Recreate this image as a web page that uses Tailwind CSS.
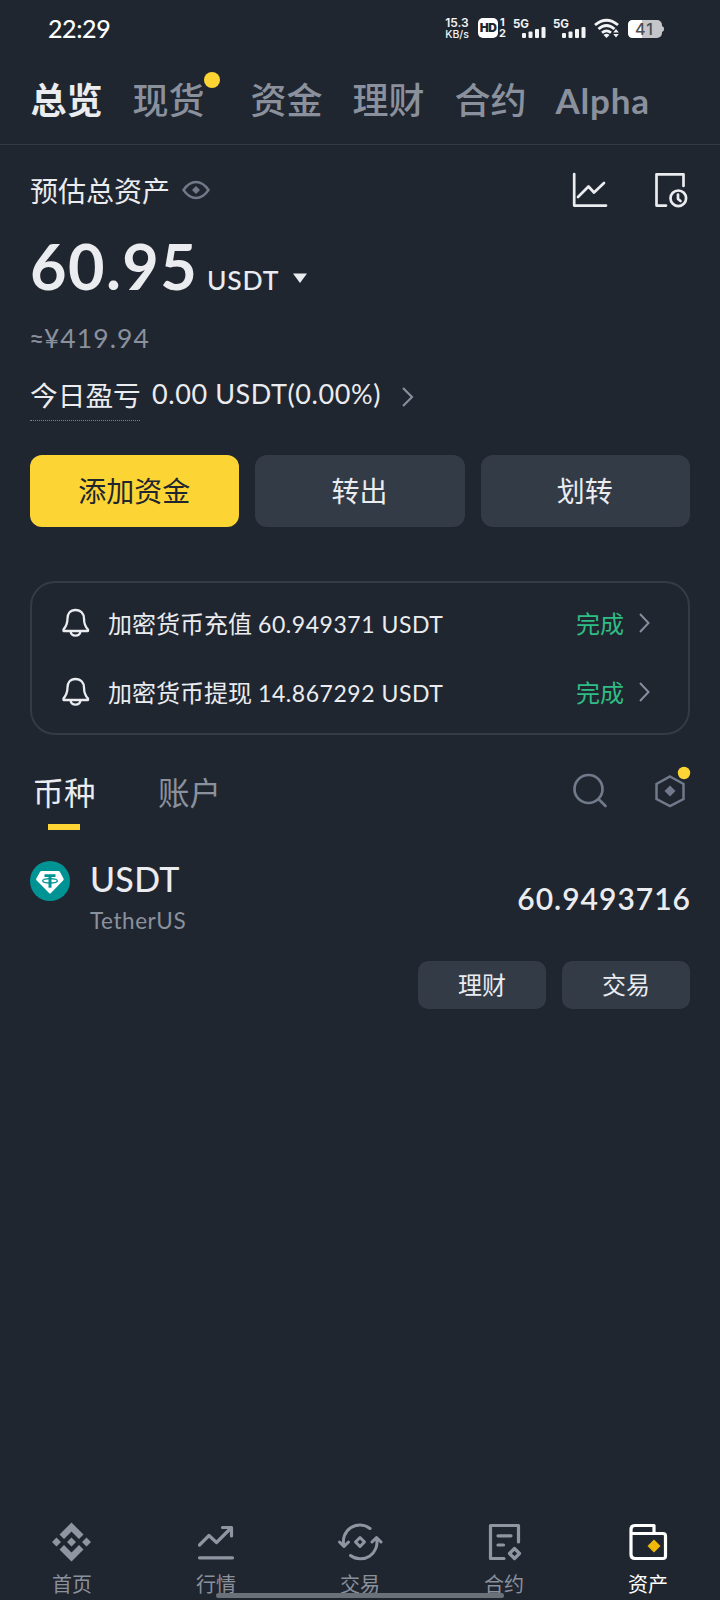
<!DOCTYPE html>
<html lang="zh-CN">
<head>
<meta charset="utf-8">
<title>资产总览</title>
<script src="https://cdn.jsdelivr.net/npm/@tailwindcss/browser@4"></script>
</head>
<body class="bg-[#202630]">
<div class="w-[720px] h-[1600px] flex flex-col relative overflow-hidden bg-[#202630] text-[#eaecef] font-['Lato','Noto_Sans_CJK_SC',sans-serif] whitespace-nowrap">

  <!-- status bar -->
  <div class="h-14 flex items-center justify-between pl-12 pr-[55px] text-white">
    <div class="text-[25px] leading-[56px] font-medium font-['Lato'] tracking-[-0.4px]">22:29</div>
    <div class="flex items-center h-[24px] text-[#f2f3f4]">
      <div class="w-[26px] flex flex-col items-center text-[12px] leading-[12px] font-semibold font-['Inter']"><span>15.3</span><span class="text-[10.500px] leading-[11px] font-medium">KB/s</span></div>
      <div class="ml-[8px] w-5 h-5 rounded-[5px] bg-white text-[#202630] text-[12px] leading-5 text-center font-black font-['Inter'] tracking-[-0.5px]">HD</div>
      <div class="ml-[1px] w-[8px] flex flex-col text-[11px] leading-[11px] font-bold font-['Inter']"><span class="pl-[1px]">1</span><span>2</span></div>
      <svg class="ml-[5px] w-10 h-6" viewBox="512 16 40 24"><text x="513" y="27.500" font-size="12" font-weight="700" font-family="Inter" fill="currentColor" textLength="16" lengthAdjust="spacingAndGlyphs">5G</text><g fill="currentColor"><rect x="522" y="33" width="4" height="5" rx="1"/><rect x="528.500" y="31.500" width="4" height="6.500" rx="1"/><rect x="535" y="29" width="4" height="9" rx="1"/><rect x="541.500" y="27" width="4" height="11" rx="1"/></g></svg>
      <svg class="w-10 h-6" viewBox="512 16 40 24"><text x="513" y="27.500" font-size="12" font-weight="700" font-family="Inter" fill="currentColor" textLength="16" lengthAdjust="spacingAndGlyphs">5G</text><g fill="currentColor"><rect x="522" y="33" width="4" height="5" rx="1"/><rect x="528.500" y="31.500" width="4" height="6.500" rx="1"/><rect x="535" y="29" width="4" height="9" rx="1"/><rect x="541.500" y="27" width="4" height="11" rx="1"/></g></svg>
      <svg class="w-[28px] h-6 ml-[1px]" viewBox="593 16 28 24" fill="none" stroke="currentColor" stroke-width="2.800"><path d="M595 25Q606.500 15.500 618 25M598.500 29Q606.500 22 614.500 29M602 32.800Q606.500 29 611 32.800"/><path d="M603.500 35Q606.500 32.500 609.500 35L606.500 38Z" fill="currentColor" stroke="none"/><path d="M616 29L618.800 32.500H613.200ZM616 37.500L618.800 34H613.200Z" fill="currentColor" stroke="none"/></svg>
      <svg class="w-[38px] h-6 ml-[6px]" viewBox="627 16 38 24"><rect x="628" y="20" width="34" height="18" rx="5" fill="#c4c6c9"/><path d="M633 20H642V38H633Q628 38 628 33V25Q628 20 633 20Z" fill="#fff"/><path d="M662 26Q664.500 27 664 29Q664.500 31 662 32Z" fill="#c4c6c9"/><text x="635" y="35" font-size="16" font-weight="500" font-family="Inter" fill="#4a4d52" textLength="18">41</text></svg>
    </div>
  </div>

  <!-- top tabs -->
  <nav class="h-[89px] border-b border-[#333b47] flex items-center gap-[30px] pl-[30.500px] text-[36px] leading-[88px] font-medium text-[#8a919d]">
    <span class="w-[72px] font-bold text-[#eaecef]">总览</span>
    <span class="w-[88px] relative">现货<i class="absolute left-[71px] top-[16px] w-4 h-4 rounded-full bg-[#fcd535]"></i></span>
    <span class="w-[72px]">资金</span>
    <span class="w-[72px]">理财</span>
    <span class="w-[72px]">合约</span>
    <span class="font-bold text-[35px] tracking-[0.8px] -ml-px">Alpha</span>
  </nav>

  <!-- balance -->
  <section class="px-[30px] flex flex-col">
    <div class="h-[92px] flex items-center justify-between">
      <div class="flex items-center gap-[11px] text-[28px] leading-[92px]">
        <span>预估总资产</span>
        <svg class="w-[30px] h-[22px] -mt-[2px]" viewBox="181 179 30 22"><path d="M183.500 190Q189 182 196 182T208.500 190Q203 198 196 198T183.500 190Z" fill="none" stroke="#707a8a" stroke-width="2.400"/><path d="M196 186L200 190L196 194L192 190Z" fill="#707a8a"/></svg>
      </div>
      <div class="flex items-center gap-[44px] -mt-[2px] text-[#eaecef]">
        <svg class="w-[38px] h-10" viewBox="571 170 38 40" fill="none" stroke="currentColor" stroke-width="2.700" stroke-linecap="round" stroke-linejoin="round"><path d="M574.200 174V205.600H606M578 197L588.500 186.500L594 192.500L604 183"/></svg>
        <svg class="w-[38px] h-10 -mr-[1px]" viewBox="653 170 38 40" fill="none" stroke="currentColor" stroke-width="2.700" stroke-linecap="round" stroke-linejoin="round"><path d="M683.500 186V174.300H656.500V205.600H666"/><circle cx="678.300" cy="198.300" r="7.800"/><path d="M678 194.500V199L680.500 201"/></svg>
      </div>
    </div>
    <div class="h-[60px] flex items-baseline leading-[58px]">
      <span class="text-[63px] font-bold tracking-[1.400px] w-[177px]">60.95</span>
      <span class="text-[26.500px] font-medium w-[85px] tracking-[0.8px]">USDT</span>
      <svg class="w-4 h-5" viewBox="292 269 16 20"><path d="M293 272.500H307L300 282Z" fill="currentColor"/></svg>
    </div>
    <div class="pt-[5px] text-[26.500px] leading-[72px] text-[#8a919d] tracking-[1.100px]"><span class="-ml-px tracking-[-0.5px]">≈</span>¥419.94</div>
    <div class="h-[47px] flex items-start leading-[43px] text-[27.700px]">
      <span class="w-[110px] h-[47px] border-b border-dotted border-[#7a828e]">今日盈亏</span>
      <span class="w-[260px] pl-3 text-[27px] leading-[39px] tracking-[0.58px]">0.00 USDT(0.00%)</span>
      <svg class="w-4 h-6 mt-[11px]" viewBox="400 385 16 24"><path d="M403 388L412 397L403 406" fill="none" stroke="#848e9c" stroke-width="2.200"/></svg>
    </div>
    <div class="mt-[34px] grid grid-cols-3 gap-4 text-[28px] leading-[72px] text-center">
      <div class="rounded-[12px] bg-[#fcd535] text-[#202630] pr-px">添加资金</div>
      <div class="rounded-[12px] bg-[#333b47] pr-px">转出</div>
      <div class="rounded-[12px] bg-[#333b47] pr-px">划转</div>
    </div>
  </section>

  <!-- notices -->
  <section class="mt-[54px] mx-[30px] h-[154px] border-2 border-[#333b47] rounded-[25px] pt-[6px] pl-[29px] pr-[37px] text-[24px]">
    <div class="flex items-center h-[69px]">
      <svg class="w-[30px] h-[32px] -mt-[1px]" viewBox="61 607 30 32" fill="none" stroke="currentColor" stroke-width="2.300" stroke-linejoin="round"><path d="M75.500 610C70 610 67.500 614 67.500 618.500C67.500 624 66 626.500 63.500 629.500V631H88V629.500C85 626.500 84 624 84 618.500C84 614 81 610 75.500 610ZM70.500 631.500C71.500 637 79.500 637 80.500 631.500"/></svg>
      <span class="ml-[17px]">加密货币充值</span><span class="ml-[6px] pt-[2px] text-[23px] tracking-[0.55px]">60.949371 USDT</span>
      <span class="ml-auto text-[#2ebd85]">完成</span>
      <svg class="w-[14px] h-6 ml-[13px] -mt-[2px]" viewBox="637 612 14 24"><path d="M640 615L648.500 624L640 633" fill="none" stroke="#848e9c" stroke-width="2"/></svg>
    </div>
    <div class="flex items-center h-[69px]">
      <svg class="w-[30px] h-[32px] -mt-[1px]" viewBox="61 607 30 32" fill="none" stroke="currentColor" stroke-width="2.300" stroke-linejoin="round"><path d="M75.500 610C70 610 67.500 614 67.500 618.500C67.500 624 66 626.500 63.500 629.500V631H88V629.500C85 626.500 84 624 84 618.500C84 614 81 610 75.500 610ZM70.500 631.500C71.500 637 79.500 637 80.500 631.500"/></svg>
      <span class="ml-[17px]">加密货币提现</span><span class="ml-[6px] pt-[2px] text-[23px] tracking-[0.55px]">14.867292 USDT</span>
      <span class="ml-auto text-[#2ebd85]">完成</span>
      <svg class="w-[14px] h-6 ml-[13px] -mt-[2px]" viewBox="637 612 14 24"><path d="M640 615L648.500 624L640 633" fill="none" stroke="#848e9c" stroke-width="2"/></svg>
    </div>
  </section>

  <!-- asset tabs -->
  <section class="mt-[25px] h-[70px] px-[33px] flex text-[31.500px] leading-[66px]">
    <div class="w-[62px] flex flex-col items-center"><span class="h-16">币种</span><i class="w-8 h-[6px] bg-[#fcd535]"></i></div>
    <div class="ml-[63px] text-[#8a919d]">账户</div>
    <svg class="w-10 h-10 ml-auto mt-[11px]" viewBox="571 771 40 40" fill="none" stroke="#707a8a" stroke-width="2.700" stroke-linecap="round"><circle cx="588.500" cy="789" r="14"/><path d="M598.500 799L605.500 806"/></svg>
    <svg class="w-10 h-12 ml-[41px] mt-[3px] -mr-[5px]" viewBox="652 763 40 48"><path d="M670 776.500L683.500 784V799L670 806L656.500 799V784Z" fill="none" stroke="#707a8a" stroke-width="2.500"/><path d="M670 785.500L675.500 791L670 796.500L664.500 791Z" fill="#707a8a"/><circle cx="684" cy="773" r="6.200" fill="#fcd535"/></svg>
  </section>

  <!-- coin row -->
  <section class="px-[30px] pt-[31px] flex h-[107px]">
    <svg class="w-10 h-10" viewBox="30 861 40 40"><circle cx="50" cy="881" r="20" fill="#009393"/><path d="M41.500 871H58.500Q59.500 871 60 872L63.500 878.500Q64 879.500 63.300 880.300L51 893Q50 894 49 893L36.500 880.300Q35.800 879.500 36.300 878.500L40 872Q40.500 871 41.500 871Z" fill="#fff"/><path d="M44.500 874.200H55.500V877H51.500V887.800H48.500V877H44.500Z" fill="#009393"/><ellipse cx="50" cy="880.800" rx="7.300" ry="2.200" fill="none" stroke="#009393" stroke-width="1.400"/></svg>
    <div class="ml-5 flex flex-col">
      <span class="text-[34px] leading-[36px] h-[38px] font-medium tracking-[0.3px]">USDT</span>
      <span class="mt-[5px] text-[22.500px] leading-[33px] text-[#8a919d] tracking-[0.55px]">TetherUS</span>
    </div>
    <span class="ml-auto text-[30px] leading-[75px] font-semibold tracking-[1px] -mr-[1px]">60.9493716</span>
  </section>
  <div class="mt-6 mr-[30px] flex justify-end gap-4 text-[24px] leading-12 text-center">
    <div class="w-32 rounded-[10px] bg-[#333b47]">理财</div>
    <div class="w-32 rounded-[10px] bg-[#333b47]">交易</div>
  </div>

  <!-- bottom navigation -->
  <nav class="mt-auto h-[80px] grid grid-cols-5 text-[20px] leading-[24px] text-[#8a919d]">
    <div class="flex flex-col items-center"><svg class="w-11 h-11" viewBox="50 1520 44 44" fill="#8f96a1"><path d="M71.500 1522.500L83.500 1534.500L79 1539L71.500 1531.500L64 1539L59.500 1534.500ZM71.500 1561.500L83.500 1549.500L79 1545L71.500 1552.500L64 1545L59.500 1549.500ZM71.500 1537.500L76 1542L71.500 1546.500L67 1542ZM56.500 1537.500L61 1542L56.500 1546.500L52 1542ZM86.500 1537.500L91 1542L86.500 1546.500L82 1542Z"/></svg><span class="mt-[8px]">首页</span></div>
    <div class="flex flex-col items-center"><svg class="w-11 h-11" viewBox="194 1520 44 44" fill="none" stroke="#8f96a1" stroke-width="3.200" stroke-linecap="round" stroke-linejoin="round"><path d="M199.500 1545L209 1535.500L216.500 1542.500L230.500 1528.500M222.500 1527.500H231.500V1536M199.500 1557.800H232.500"/></svg><span class="mt-[8px]">行情</span></div>
    <div class="flex flex-col items-center"><svg class="w-12 h-11" viewBox="336 1520 48 44" fill="none" stroke="#8f96a1" stroke-width="3" stroke-linecap="round" stroke-linejoin="round"><path d="M370 1528.500A16.500 16.500 0 0 0 344 1546M339.500 1542L344 1546.500L348.500 1542M350.500 1555.500A16.500 16.500 0 0 0 376.500 1538.500M372 1542L376.500 1537.500L381 1542"/><path d="M360 1537.500L364.500 1542L360 1546.500L355.500 1542Z"/></svg><span class="mt-[8px]">交易</span></div>
    <div class="flex flex-col items-center"><svg class="w-11 h-11" viewBox="482 1520 44 44" fill="none" stroke="#8f96a1" stroke-width="3.200" stroke-linecap="round" stroke-linejoin="round"><path d="M518.500 1542V1525.500H490.500V1558.500H504M498 1535.800H511M498 1545H503.500"/><path d="M514.500 1548.500L519.500 1553.500L514.500 1558.500L509.500 1553.500Z"/></svg><span class="mt-[8px]">合约</span></div>
    <div class="flex flex-col items-center text-white"><svg class="w-11 h-11" viewBox="626 1520 44 44" fill="none" stroke="#fff" stroke-width="3.200" stroke-linejoin="round"><path d="M631 1533.500V1554.500Q631 1558.500 635 1558.500H663Q665.500 1558.500 665.500 1556V1536Q665.500 1533.500 663 1533.500H631V1529.500Q631 1525.500 635 1525.500H654V1533.500"/><path d="M654 1539.500L660.500 1546L654 1552.500L647.500 1546Z" fill="#f0b90b" stroke="none"/></svg><span class="mt-[8px]">资产</span></div>
  </nav>
  <i class="absolute left-[216px] top-[1593px] w-72 h-[5px] rounded-full bg-[#6b7178]"></i>
</div>
</body>
</html>
